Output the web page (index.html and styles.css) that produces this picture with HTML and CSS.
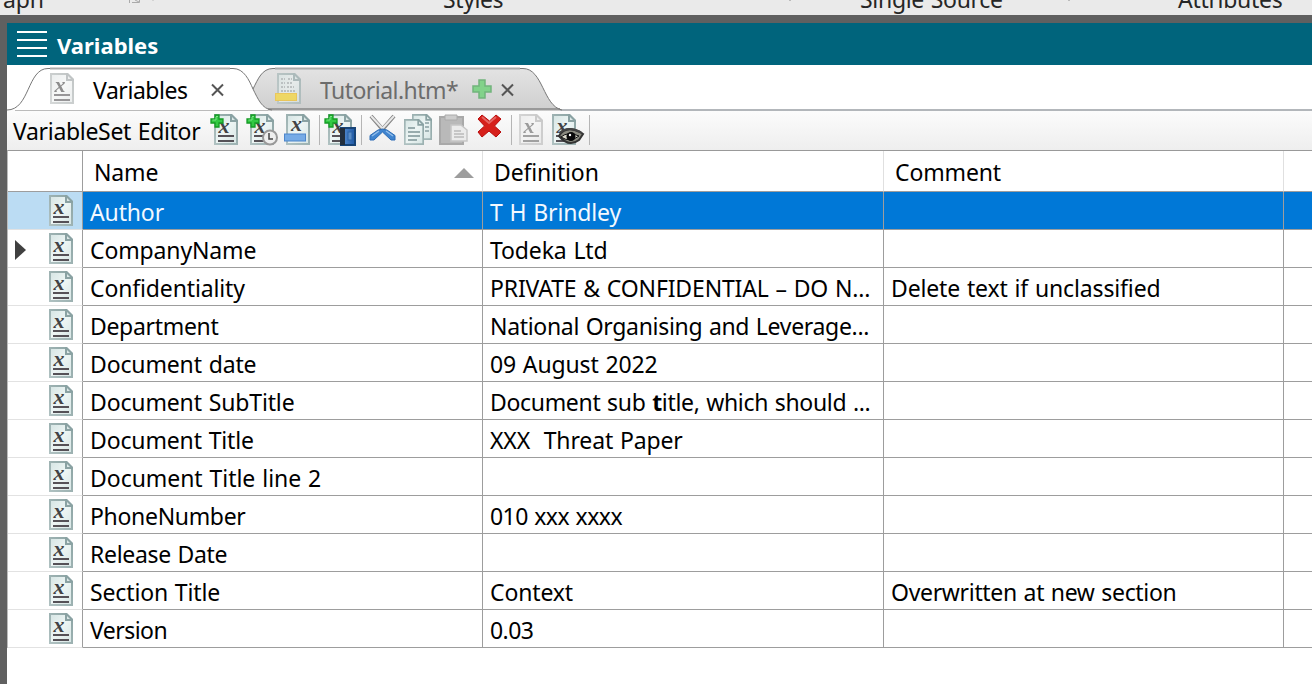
FILE: index.html
```
<!DOCTYPE html>
<html lang="en">
<head>
<meta charset="utf-8">
<title>Variables</title>
<link rel="stylesheet" href="styles.css">
</head>
<body>
<svg class="defs" aria-hidden="true">
  <defs>
    <linearGradient id="paper" x1="0" y1="0" x2="1" y2="1"><stop offset="0" stop-color="#d6e5e4"/><stop offset=".5" stop-color="#edf5f4"/><stop offset="1" stop-color="#d6e5e4"/></linearGradient>
    <linearGradient id="edge" x1="1" y1="0" x2="0" y2="1"><stop offset="0" stop-color="#8ba3a3"/><stop offset="1" stop-color="#afc1c1"/></linearGradient>
    <linearGradient id="blue" x1="0" y1="0" x2="1" y2="0"><stop offset="0" stop-color="#5c92d3"/><stop offset="1" stop-color="#1e58a5"/></linearGradient>
    <linearGradient id="tabfill" x1="0" y1="0" x2="0" y2="1"><stop offset="0" stop-color="#e3e3e3"/><stop offset="1" stop-color="#cfcfcf"/></linearGradient>
    <symbol id="page" viewBox="0 0 24 31">
      <path d="M1 1H17L23 7V30H1Z" fill="url(#paper)" stroke="url(#edge)" stroke-width="2"/>
      <path d="M16 0V8H24V6L18 0Z" fill="#8aa2a3"/><path d="M18 3V6H21Z" fill="#dce8e8"/>
    </symbol>
    <symbol id="var" viewBox="0 0 24 31">
      <use href="#page" width="24" height="31"/>
      <text x="4.500" y="19" class="glyph" textLength="11" lengthAdjust="spacingAndGlyphs">x</text>
      <path d="M4 22H20M4 27H20" stroke="#555157" stroke-width="2"/>
    </symbol>
    <symbol id="plus" viewBox="0 0 14 14">
      <path d="M5 1H9V5H13V9H9V13H5V9H1V5H5Z" fill="#32c943" stroke="#159a25" stroke-width="1.300"/><path d="M6 2.500H8M2.500 6H6V3" stroke="#7be486" fill="none"/>
    </symbol>
  </defs>
</svg>
<div class="ribbon">
  <span class="group g1">aph</span>
  <svg class="launcher" width="28" height="5"><path d="M1.500 0V3M4 2.500H11.500V0M7 0L11 2" stroke="#aaa" fill="none"/><path d="M24 0h2" stroke="#bbb"/></svg>
  <span class="group g2">Styles</span><i class="dot d1"></i>
  <span class="group g3">Single Source</span><i class="dot d2"></i>
  <span class="group g4">Attributes</span>
</div>
<main class="window">
  <header class="title">
    <svg width="30" height="28"><path d="M0 2H30M0 10H30M0 18H30M0 26H30" stroke="#fff" stroke-width="2"/></svg>
    <h1>Variables</h1>
  </header>
  <nav class="tabs">
    <svg class="shape" width="1305" height="46" viewBox="7 65 1305 46">
      <path d="M560 110H1312" stroke="#9a9fa5" stroke-width="1.500"/>
      <path d="M253 89C258 79 262 68.500 273 68.500H523C543 68.500 543 106 562 110H273C262 109 258 99 253 89Z" fill="url(#tabfill)"/>
      <path d="M268 109.300H560" stroke="#999" stroke-width="2.400"/>
      <path d="M272 110C262 109 258 99 253 89C258 79 262 68.500 273 68.500H523C543 68.500 543 106 562 110" fill="none" stroke="#777"/>
      <path d="M7 110C30 110 27 68.500 48 68.500H233C244 68.500 249 80 253 89" fill="none" stroke="#777"/>
      <path d="M50 68.500H230M275 68.500H520" stroke="#aaa" stroke-width="2"/>
      <path d="M15 110.500H268" stroke="#bbb"/>
    </svg>
    <div class="tab first">
      <svg class="faded" width="24" height="31"><use href="#var" width="24" height="31"/></svg>
      <span class="label">Variables</span>
      <svg class="close" width="13" height="12"><path d="M1 .5L12 11.500M12 .5L1 11.500" stroke="#555" stroke-width="2"/></svg>
    </div>
    <div class="tab second">
      <svg class="tut" width="26" height="32"><g transform="translate(2)"><use href="#page" width="24" height="31"/><path d="M4 6H8M11 6H15M4 10H8M10 10H15M4 14H8M10 14H17M4 18H18" stroke="#939a9d" stroke-width="1.500" stroke-dasharray="2 1"/></g><rect x=".5" y="20.500" width="21" height="7" fill="#ffd91c" stroke="#f9bd0b"/></svg>
      <span class="label dim">Tutorial.htm*</span>
      <svg class="add" width="20" height="20"><path d="M7 1H13V7H19V13H13V19H7V13H1V7H7Z" fill="#82d28a" stroke="#72b47c" stroke-width="1.500"/></svg>
      <svg class="close" width="13" height="12"><path d="M1 .5L12 11.500M12 .5L1 11.500" stroke="#555" stroke-width="2"/></svg>
    </div>
  </nav>
  <section class="toolbar">
    <span class="label editor">VariableSet Editor</span>
    <svg class="w36" height="32"><use href="#var" x="4" width="24" height="31"/><use href="#plus" width="14" height="14"/></svg>
    <svg class="w38" height="32"><use href="#var" x="4" width="24" height="31"/><use href="#plus" width="14" height="14"/><circle cx="24" cy="23.500" r="7" fill="#eee" stroke="#999" stroke-width="2"/><path d="M23 19V25H27" fill="none" stroke="#444" stroke-width="1.500"/></svg>
    <svg class="w35" height="32"><use href="#page" x="2" width="24" height="31"/><text x="7" y="17" class="glyph" textLength="11" lengthAdjust="spacingAndGlyphs">x</text><rect x=".5" y="20" width="21" height="7" fill="#76abe6" stroke="#4d86cb"/></svg>
    <i class="sep narrow"></i>
    <svg class="w37" height="32"><use href="#var" x="4" width="24" height="31"/><use href="#plus" width="14" height="14"/><path d="M17 14H31V31H17Z" fill="url(#blue)" stroke="#174477" stroke-width="2"/><path d="M16 14H21V31H16Z" fill="#222e3d"/><rect x="24" y="18" width="4" height="8" fill="#598cc6" stroke="#2a62a7"/></svg>
    <i class="sep"></i>
    <svg class="w35" height="32"><path d="M2 2L15 17M25 2L12 17" stroke="#858585" stroke-width="4"/><path d="M2 2L14 15M25 2L13 15" stroke="#e8e8e8" stroke-width="2"/><path d="M13.500 15L18 16L26 21.500V26H22L13.500 18L5 26H1V21.500L9 16Z" fill="#3f84cf" stroke="#2e6db5"/><path d="M3 22L10 17M24 22L17 17" stroke="#91bdea" stroke-width="1.500"/></svg>
    <svg class="w35" height="32"><use href="#page" x="8" width="20" height="26"/><path d="M21 9H25M21 13H25M21 17H25" stroke="#8aa0a2" stroke-width="1.500"/><use href="#page" y="5" width="20" height="26"/><path d="M4 14H11M4 18H16M4 22H16M4 26H13" stroke="#7d9496" stroke-width="1.500"/></svg>
    <svg class="w38" height="32"><path d="M1 3H24V30H1Z" fill="#b9b9b9" stroke="#a9a9a9" stroke-width="2"/><path d="M6 1H18V6H6Z" fill="#ccc" stroke="#aaa"/><path d="M12 11H22L28 16V27H12Z" fill="#ebebeb" stroke="#c6c6c6" stroke-width="1.500"/><path d="M15 17H22M15 20H25M15 23H25" stroke="#bbb" stroke-width="1.500"/></svg>
    <svg class="w34" height="32"><path d="M5 1L12.500 7L19 1L24 5L17.500 12L24 18L19 23L12 17L5 23L1 18L7.500 12L1 5Z" fill="#d6201b" stroke="#b90d0d"/><path d="M5 3L12 9L19 3" fill="none" stroke="#e66562" stroke-width="2"/></svg>
    <i class="sep"></i>
    <svg class="w33 gray" height="32"><use href="#var" width="24" height="31"/></svg>
    <svg class="w37" height="32"><use href="#var" width="24" height="31"/><path d="M7 22C11 15 18 13 28 18L31 20L27 26C19 32 12 28 7 22Z" fill="#8b8b80" stroke="#333" stroke-width="2"/><path d="M9 23Q16 17 27 22Q18 29 9 23Z" fill="#d8d7c9" stroke="#111"/><circle cx="19" cy="22.500" r="4.500" fill="#090909"/><circle cx="18" cy="21" r="1.200" fill="#fff"/><path d="M7 19Q17 11 30 19" fill="none" stroke="#444" stroke-width="2"/></svg>
    <i class="sep"></i>
  </section>
  <section class="grid">
    <div class="row head"><span class="gut"></span><span>Name<svg class="sort" width="20" height="10"><path d="M0 10L10 0L20 10Z" fill="#9d9d9d"/></svg></span><span>Definition</span><span>Comment</span><span></span></div>
    <div class="row selected"><span class="gut"><svg class="ico"><use href="#var"/></svg></span><span>Author</span><span>T H Brindley</span><span></span><span></span></div>
    <div class="row"><span class="gut"><svg class="current" width="11" height="20"><path d="M0 0L11 10L0 20Z" fill="#404040"/></svg><svg class="ico"><use href="#var"/></svg></span><span>CompanyName</span><span>Todeka Ltd</span><span></span><span></span></div>
    <div class="row"><span class="gut"><svg class="ico"><use href="#var"/></svg></span><span>Confidentiality</span><span class="caps">PRIVATE &amp; CONFIDENTIAL – DO N...</span><span>Delete text if unclassified</span><span></span></div>
    <div class="row"><span class="gut"><svg class="ico"><use href="#var"/></svg></span><span class="snug">Department</span><span class="snug">National Organising and Leverage...</span><span></span><span></span></div>
    <div class="row"><span class="gut"><svg class="ico"><use href="#var"/></svg></span><span>Document date</span><span>09 August 2022</span><span></span><span></span></div>
    <div class="row"><span class="gut"><svg class="ico"><use href="#var"/></svg></span><span>Document SubTitle</span><span class="snug">Document sub <b>t</b>itle, which should ...</span><span></span><span></span></div>
    <div class="row"><span class="gut"><svg class="ico"><use href="#var"/></svg></span><span>Document Title</span><span>XXX&nbsp; Threat Paper</span><span></span><span></span></div>
    <div class="row"><span class="gut"><svg class="ico"><use href="#var"/></svg></span><span class="loose">Document Title line 2</span><span></span><span></span><span></span></div>
    <div class="row"><span class="gut"><svg class="ico"><use href="#var"/></svg></span><span class="snug">PhoneNumber</span><span class="tight">010 xxx xxxx</span><span></span><span></span></div>
    <div class="row"><span class="gut"><svg class="ico"><use href="#var"/></svg></span><span class="snug">Release Date</span><span></span><span></span><span></span></div>
    <div class="row"><span class="gut"><svg class="ico"><use href="#var"/></svg></span><span>Section Title</span><span>Context</span><span class="snug">Overwritten at new section</span><span></span></div>
    <div class="row"><span class="gut"><svg class="ico"><use href="#var"/></svg></span><span class="tight">Version</span><span class="tight">0.03</span><span></span><span></span></div>
  </section>
</main>
</body>
</html>
```
FILE: styles.css
```
* { box-sizing: border-box; }
body { margin: 0; width: 1312px; height: 684px; overflow: hidden; background: #606060; color: #000; font: 23px/38px "Noto Sans", sans-serif; letter-spacing: -.14px; word-spacing: 1px; }
svg { display: block; flex: none; overflow: visible; }
.defs { position: absolute; width: 0; height: 0; }
.glyph { font: italic bold 20px "Liberation Serif", serif; letter-spacing: 0; fill: #424244; }
.ribbon { height: 15px; background: #eaeaea; overflow: hidden; display: grid; grid-template-columns: 128px 315px 346px 71px 205px 113px 1fr; color: #262626; white-space: nowrap; }
.group { line-height: 30px; margin-top: -16px; height: 31px; grid-row: 1; }
.g1 { grid-column: 1; margin-left: 3px; }
.g2 { grid-column: 3; letter-spacing: -.4px; }
.g3 { grid-column: 5; letter-spacing: -.3px; }
.g4 { grid-column: 7; letter-spacing: -.3px; }
.launcher { grid-row: 1; grid-column: 2; }
.dot { grid-row: 1; width: 2px; height: 1px; background: #bbb; }
.d1 { grid-column: 4; }
.d2 { grid-column: 6; margin-left: 3px; }
.window { margin: 8px 0 0 7px; height: 661px; background: #fff; }
.title { height: 42px; background: #00647c; display: flex; align-items: center; padding: 0 0 0 10px; gap: 10px; color: #fff; }
.title h1 { margin: 1px 0 0; font: bold 22px/40px "Noto Sans", sans-serif; letter-spacing: 0; }
.tabs { position: relative; height: 45px; display: flex; }
.shape { position: absolute; left: 0; top: 0; }
.tab { position: relative; display: flex; padding-top: 8px; }
.first { width: 246px; padding-left: 43px; }
.second { padding-left: 22px; }
.faded { opacity: .6; filter: grayscale(.7); }
.tut { opacity: .6; }
.tab .label { line-height: 35px; margin-left: 19px; width: 99px; white-space: nowrap; letter-spacing: -.45px; }
.tab .dim { color: #6c6c6c; margin-left: 19px; width: 137px; letter-spacing: -.55px; }
.tab .close { margin: 11px 0 0 19px; }
.second .close { margin-left: 9px; }
.add { margin: 6px 0 0 15px; }
.toolbar { height: 40px; display: flex; padding: 4px 0 0 6px; background: linear-gradient(#fcfcfc, #eee); }
.editor { width: 197px; line-height: 35px; white-space: nowrap; letter-spacing: -.32px; }
.w33 { width: 33px; }
.w34 { width: 34px; }
.w35 { width: 35px; }
.w36 { width: 36px; }
.w37 { width: 37px; }
.w38 { width: 38px; }
.gray { filter: grayscale(1); opacity: .5; }
.sep { width: 1px; height: 30px; margin: 1px 7px 0 0; background: #b5b5b5; }
.narrow { margin-right: 4px; }
.grid { border-top: 1px solid #999; border-left: 1px solid #bbb; }
.row { display: grid; grid-template-columns: 75px 400px 401px 400px 1fr; height: 38px; }
.row > span { border-right: 1px solid #9d9d9d; border-bottom: 1px solid #9d9d9d; padding-left: 7px; line-height: 41px; height: 38px; white-space: pre; }
.row > span:last-child { border-right: 0; }
.row > .gut { border-bottom-color: #e2e2e2; position: relative; padding: 3px 0 0 41px; }
.ico { width: 24px; height: 31px; }
.current { position: absolute; left: 7px; top: 10px; }
.head > span, .head > .gut { height: 41px; padding-left: 11px; border-color: #e0e0e0; border-bottom-color: #9d9d9d; line-height: 43px; }
.row.head > .gut { border-right-color: #9d9d9d; border-bottom-color: #9d9d9d; }
.row.head { height: 41px; }
.head > span:nth-child(2) { display: flex; justify-content: space-between; padding-right: 8px; }
.sort { margin-top: 17px; }
.caps { letter-spacing: -.15px; }
.snug { letter-spacing: -.32px; }
.tight { letter-spacing: -.55px; }
.loose { letter-spacing: -.04px; }
.selected { background: #0078d7; color: #f3f9ff; }
.row.selected .gut { background: #bbdcf3; }
```
